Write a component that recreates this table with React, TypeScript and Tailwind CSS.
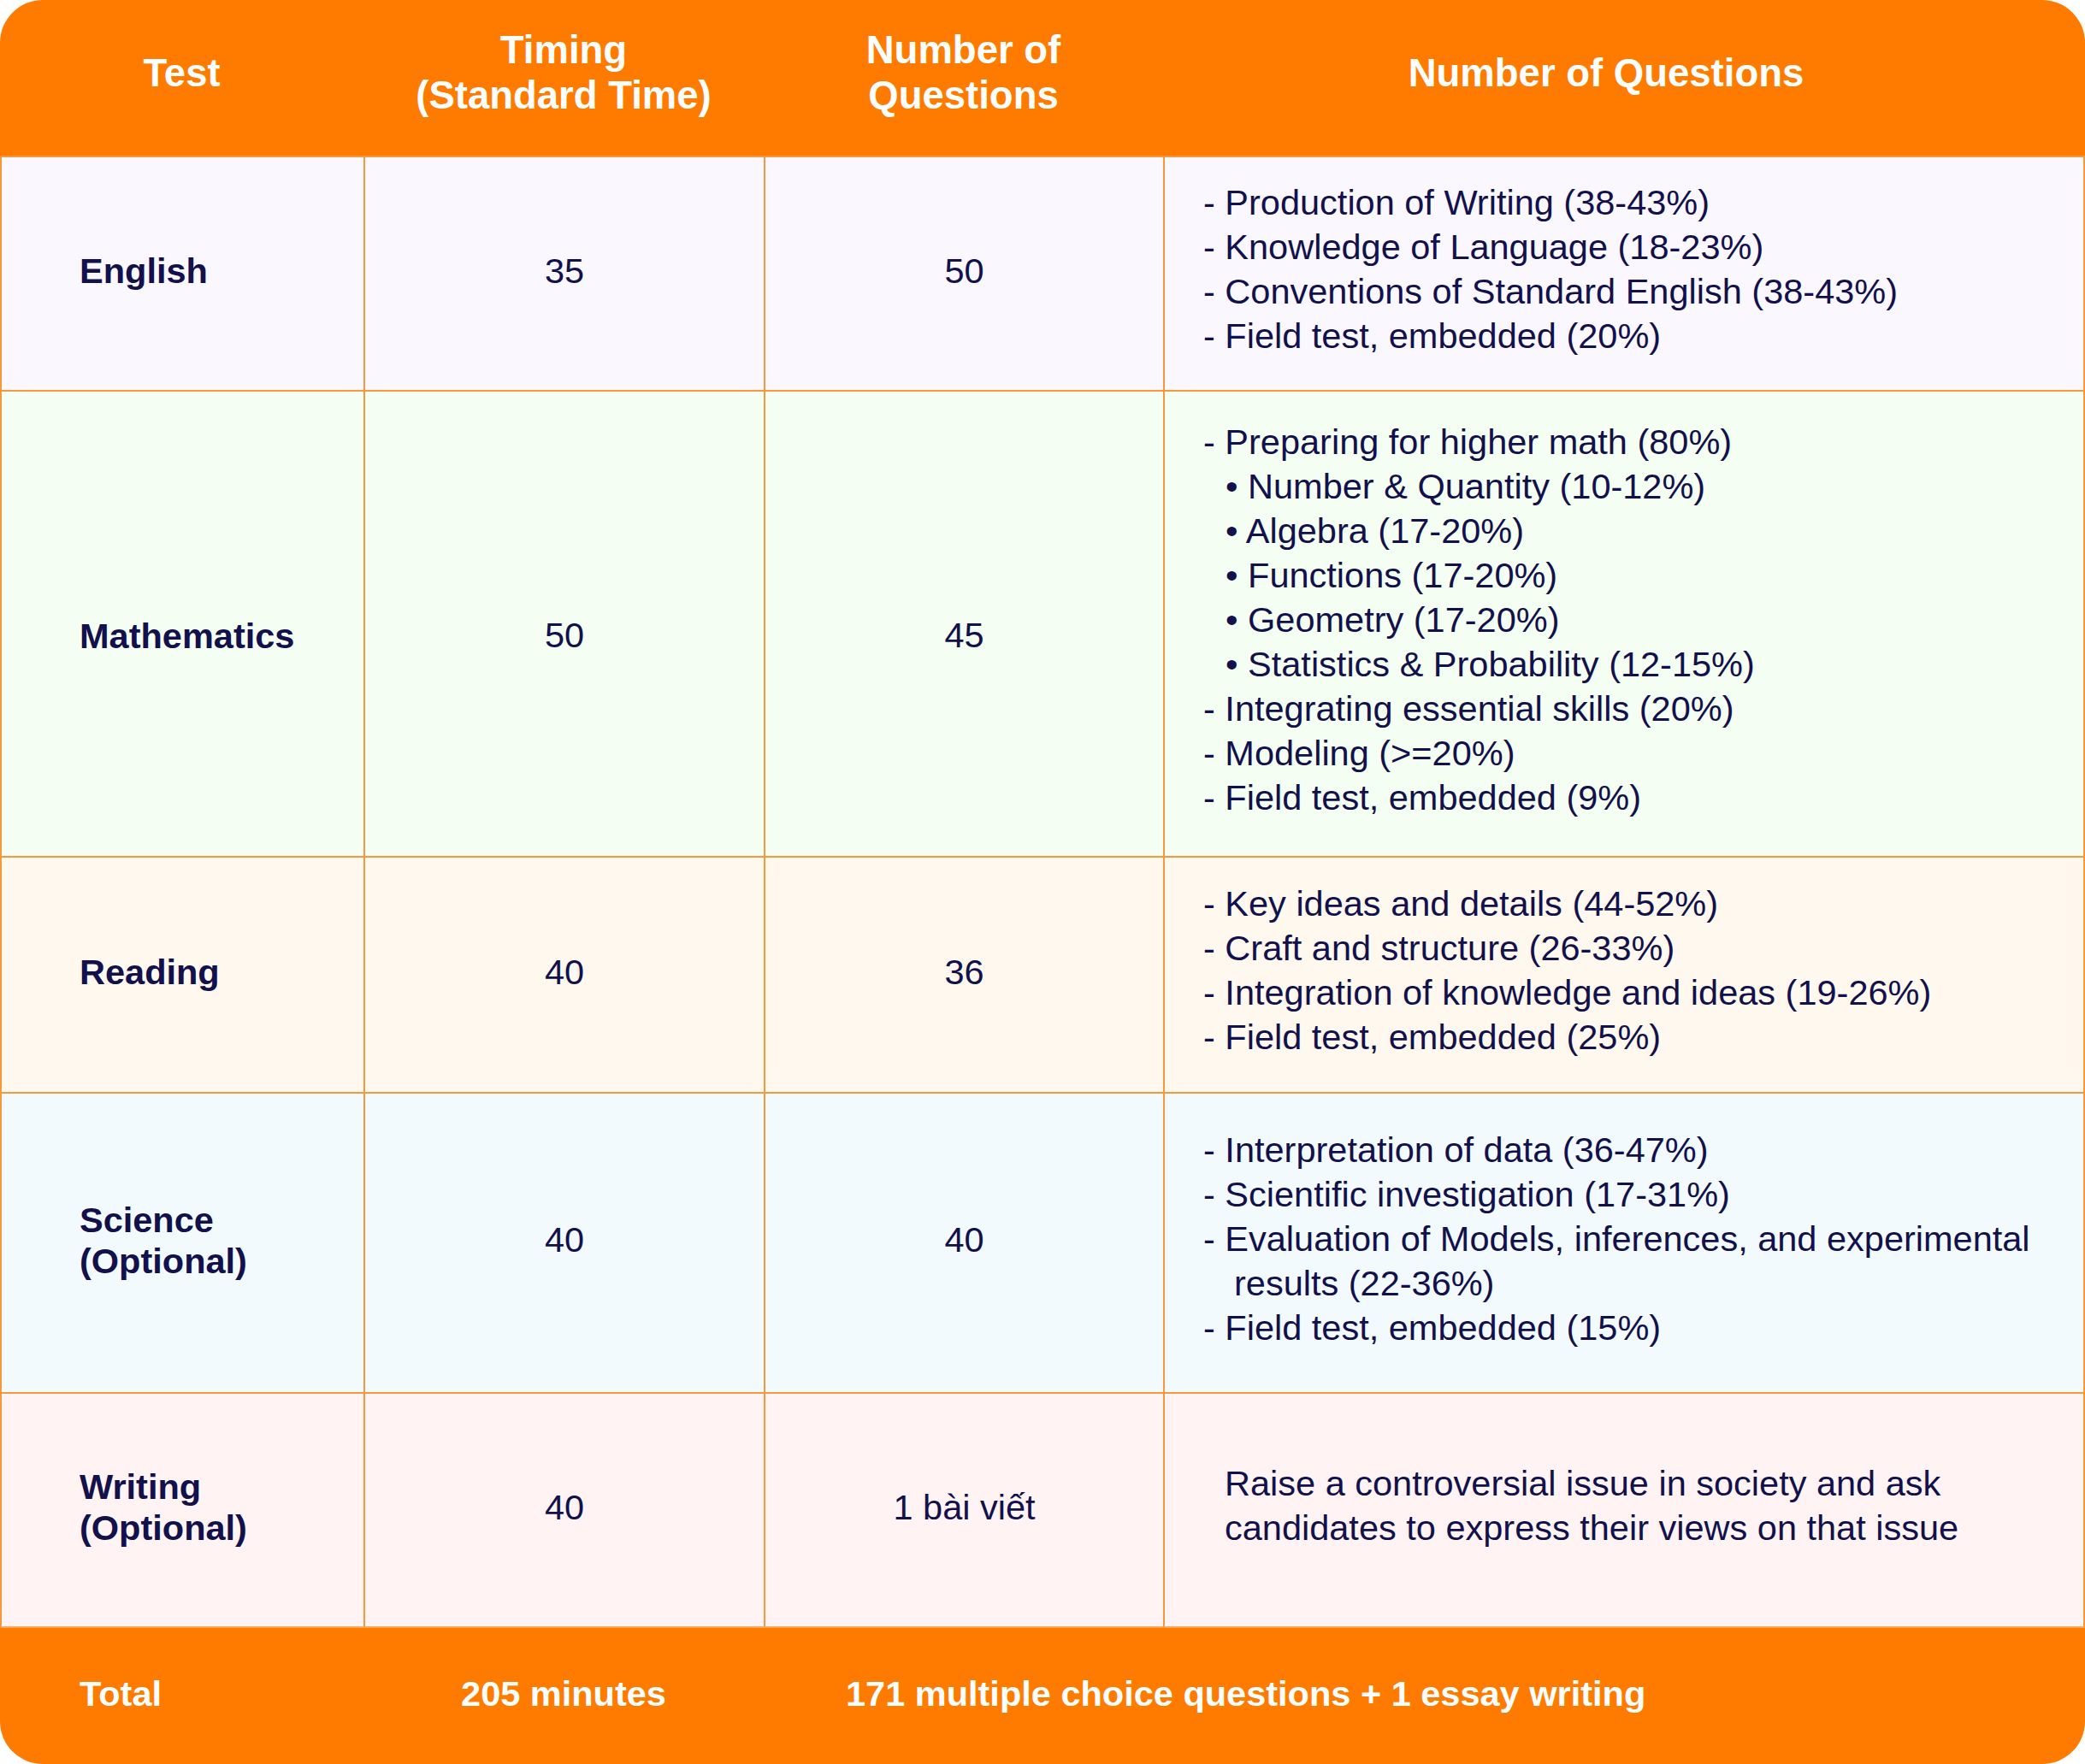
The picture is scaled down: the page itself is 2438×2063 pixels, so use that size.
import React from "react";

type Row = {
  name: string[];
  timing: string;
  count: string;
  bg: string;
  h: string;
  lift?: string;
  lines: React.ReactNode;
};

const Dash = ({ children }: { children: React.ReactNode }) => <div className="whitespace-nowrap">- {children}</div>;
const Dot = ({ children }: { children: React.ReactNode }) => (
  <div className="whitespace-nowrap pl-[26px]">• {children}</div>
);

const rows: Row[] = [
  {
    name: ["English"],
    timing: "35",
    count: "50",
    bg: "bg-[#fbf7fe]",
    h: "h-[274px]",
    lines: (
      <>
        <Dash>Production of Writing (38-43%)</Dash>
        <Dash>Knowledge of Language (18-23%)</Dash>
        <Dash>Conventions of Standard English (38-43%)</Dash>
        <Dash>Field test, embedded (20%)</Dash>
      </>
    ),
  },
  {
    name: ["Mathematics"],
    timing: "50",
    count: "45",
    bg: "bg-[#f5fef3]",
    h: "h-[545px]",
    lift: "pt-[34px]",
    lines: (
      <>
        <Dash>Preparing for higher math (80%)</Dash>
        <Dot>Number &amp; Quantity (10-12%)</Dot>
        <Dot>Algebra (17-20%)</Dot>
        <Dot>Functions (17-20%)</Dot>
        <Dot>Geometry (17-20%)</Dot>
        <Dot>Statistics &amp; Probability (12-15%)</Dot>
        <Dash>Integrating essential skills (20%)</Dash>
        <Dash>Modeling (&gt;=20%)</Dash>
        <Dash>Field test, embedded (9%)</Dash>
      </>
    ),
  },
  {
    name: ["Reading"],
    timing: "40",
    count: "36",
    bg: "bg-[#fff8ef]",
    h: "h-[276px]",
    lines: (
      <>
        <Dash>Key ideas and details (44-52%)</Dash>
        <Dash>Craft and structure (26-33%)</Dash>
        <Dash>Integration of knowledge and ideas (19-26%)</Dash>
        <Dash>Field test, embedded (25%)</Dash>
      </>
    ),
  },
  {
    name: ["Science", "(Optional)"],
    timing: "40",
    count: "40",
    bg: "bg-[#f2fafe]",
    h: "h-[351px]",
    lines: (
      <>
        <Dash>Interpretation of data (36-47%)</Dash>
        <Dash>Scientific investigation (17-31%)</Dash>
        <Dash>Evaluation of Models, inferences, and experimental</Dash>
        <div className="whitespace-nowrap pl-[36px]">results (22-36%)</div>
        <Dash>Field test, embedded (15%)</Dash>
      </>
    ),
  },
  {
    name: ["Writing", "(Optional)"],
    timing: "40",
    count: "1 bài viết",
    bg: "bg-[#fff4f3]",
    h: "h-[274px]",
    lines: (
      <div className="pl-[25px]">
        <div className="whitespace-nowrap">Raise a controversial issue in society and ask</div>
        <div className="whitespace-nowrap">candidates to express their views on that issue</div>
      </div>
    ),
  },
];

export default function App() {
  return (
    <div className="w-[2438px] bg-white font-['Liberation_Sans'] text-[41.5px] text-[#12114b]">
      <div className="overflow-hidden rounded-[50px] bg-[#ff7b00]">
        {/* header */}
        <div className="grid h-[182px] grid-cols-[425px_468px_467px_1fr] pb-[12px] text-[45.5px] font-bold leading-[53px] text-white">
          <div className="flex items-center justify-center">Test</div>
          <div className="flex flex-col items-center justify-center text-center">
            <span>Timing</span>
            <span>(Standard Time)</span>
          </div>
          <div className="flex flex-col items-center justify-center text-center">
            <span>Number of</span>
            <span>Questions</span>
          </div>
          <div className="flex items-center justify-center pr-[42px]">Number of Questions</div>
        </div>

        {rows.map((r) => (
          <div
            key={r.name[0]}
            className={`grid grid-cols-[425px_468px_467px_1fr] border-t-2 border-[#f7993a] ${r.bg} ${r.h}`}
          >
            <div className={`flex flex-col justify-center border-l-2 border-[#f7993a] pb-[6px] pl-[91px] font-bold leading-[48px] ${r.lift ?? ""}`}>
              {r.name.map((n) => (
                <span key={n}>{n}</span>
              ))}
            </div>
            <div className={`flex items-center justify-center border-l-2 border-[#f7993a] pb-[6px] ${r.lift ?? ""}`}>{r.timing}</div>
            <div className={`flex items-center justify-center border-l-2 border-[#f7993a] pb-[6px] ${r.lift ?? ""}`}>{r.count}</div>
            <div className="flex flex-col justify-center border-x-2 border-[#f7993a] pb-[10px] pl-[45px] leading-[52px]">
              {r.lines}
            </div>
          </div>
        ))}

        {/* total */}
        <div className="grid h-[161px] grid-cols-[425px_468px_1fr] border-t-2 border-[#fba45a] pb-[4px] font-bold text-white">
          <div className="flex items-center pl-[93px]">Total</div>
          <div className="flex items-center justify-center">205 minutes</div>
          <div className="flex items-center pl-[96px]">171 multiple choice questions + 1 essay writing</div>
        </div>
      </div>
    </div>
  );
}
